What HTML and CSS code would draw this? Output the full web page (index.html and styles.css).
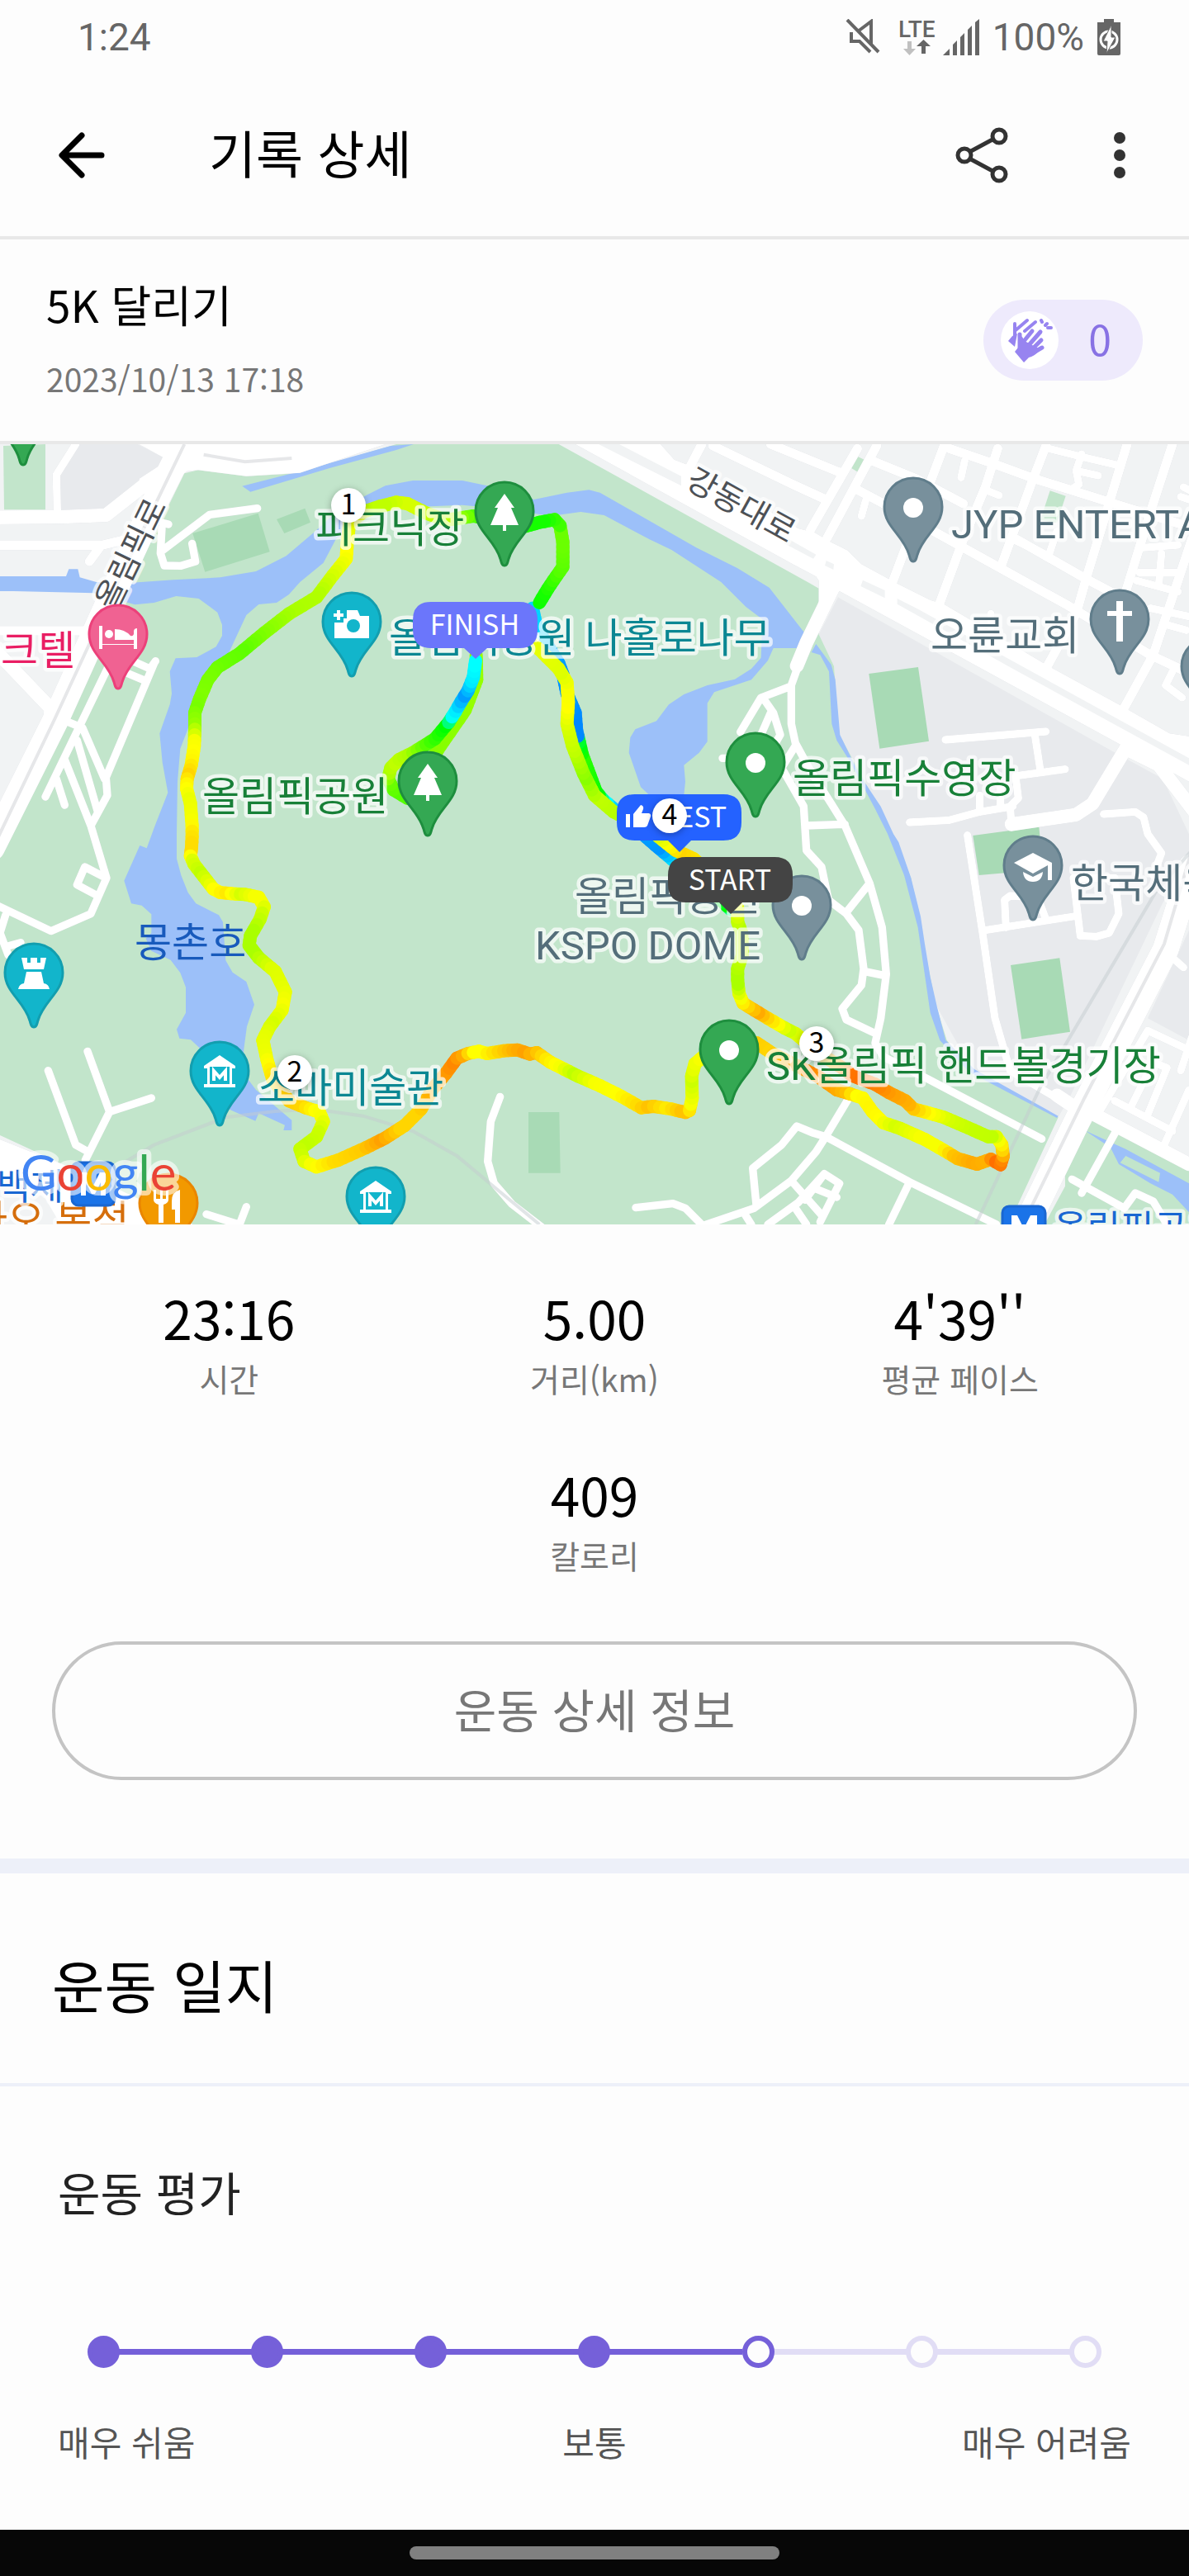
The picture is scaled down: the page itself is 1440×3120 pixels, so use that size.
FILE: index.html
```html
<!DOCTYPE html>
<html lang="ko">
<head>
    <meta charset="UTF-8">
    <meta name="viewport" content="width=device-width, initial-scale=1.0">
    <title>기록 상세</title>
    <link rel="stylesheet" href="styles.css">
</head>
<body>
    <!-- 상태 표시줄 -->
    <div class="status-bar">
        <span>1:24</span>
        <div class="status-icons">
            <svg class="icon-mute" width="42" height="44" viewBox="0 0 42 44">
                <path d="M15 15L31 3V32M7 16V27H17L30 40" fill="none" stroke="#666" stroke-width="4"/>
                <path d="M2 1L40 40" stroke="#666" stroke-width="4"/>
            </svg>
            <svg class="icon-lte" width="50" height="44" viewBox="0 0 50 44">
                <text x="0" y="22">LTE</text>
                <path d="M11 27h5v9h5l-7.500 8l-7.500-8h5z" fill="#c0c0c0"/>
                <path d="M28 42h5v-9h6l-8.500-8l-8.500 8h6z" fill="#666"/>
            </svg>
            <svg class="icon-signal" width="44" height="44" viewBox="0 0 44 44" fill="#666">
                <path d="M0 44L8 36V44zM12 44V31L17 26V44zM21 44V22L26 17V44zM30 44V13L35 8V44zM39 44V4L44 0V44z"/>
            </svg>
            <span>100%</span>
            <svg width="28" height="44" viewBox="0 0 28 44">
                <path d="M8 0h12v4h8v38q0 2-2 2H2q-2 0-2-2V4h8z" fill="#666"/>
                <circle cx="14" cy="25" r="10" fill="none" stroke="#fdfdfd" stroke-width="3"/>
                <path d="M17 7L7 27H12L11 42L22 22H17z" fill="#fdfdfd" stroke="#666" stroke-width="1"/>
            </svg>
        </div>
    </div>

    <!-- 상단 바 -->
    <header class="app-bar">
        <button class="icon-button" aria-label="뒤로">
            <svg width="60" height="60" viewBox="0 0 60 60" fill="none" stroke="#000" stroke-width="7" stroke-linecap="round" stroke-linejoin="round">
                <path d="M30 6L6 30L30 54M7 30H54"/>
            </svg>
        </button>
        <h1>기록 상세</h1>
        <div class="app-actions">
            <button class="icon-button" aria-label="공유">
                <svg width="64" height="68" viewBox="0 0 64 68" fill="none" stroke="#333" stroke-width="5">
                    <circle cx="11" cy="34" r="8"/>
                    <circle cx="53" cy="11" r="8"/>
                    <circle cx="53" cy="57" r="8"/>
                    <path d="M19 29L45 15M19 39L45 53"/>
                </svg>
            </button>
            <button class="icon-button" aria-label="더보기">
                <svg width="14" height="56" viewBox="0 0 14 56" fill="#333">
                    <circle cx="7" cy="7" r="7"/>
                    <circle cx="7" cy="28" r="7"/>
                    <circle cx="7" cy="49" r="7"/>
                </svg>
            </button>
        </div>
    </header>

    <main>
        <section class="summary">
            <div class="summary-text">
                <h2>5K 달리기</h2>
                <p>2023/10/13 17:18</p>
            </div>
            <button class="clap" aria-label="박수 0">
                <svg width="70" height="70" viewBox="0 0 70 70">
                    <circle cx="35" cy="35" r="35" fill="#fff"/>
                    <g fill="#9784f0" stroke="#9784f0" stroke-width="5" stroke-linecap="round">
                        <path d="M17 15V31M18 23L32 11M29 24L42 13M49 11L50 13M56 15L54 17M61 20H57" fill="none" stroke-width="4"/>
                        <path d="M14 30L20 27L17 43L9 36z" stroke="none"/>
                        <path d="M23 28V44M29 35L38 24M34 41L48 25M38 46L49 35M38 51L50 44" fill="none"/>
                        <path d="M21 28L26 31L29 36L38 41L48 46Q42 54 34 56L28 62L17 49L21 44z" stroke="none"/>
                    </g>
                </svg>
                <span>0</span>
            </button>
        </section>

        <!-- 지도 -->
        <svg class="map" viewBox="0 0 1440 945" role="img" aria-label="달린 경로">
            <defs>
                <path id="pin" d="M0 66C-3 66-4 62-5 58C-12 34-35 24-35 0A35 35 0 0 1 35 0C35 24 12 34 5 58C4 62 3 66 0 66z"/>
                <path id="tree" d="M0-21L12-4H8L17 17H2V24H-2V17H-17L-8-4H-12z" fill="#fff"/>
                <circle id="dot" cy="1" r="12" fill="#fff"/>
                <g id="museum">
                    <path d="M0-19L19-6V-3H15V16H19V20H-19V16H-15V-3H-19V-6z" fill="#fff"/>
                    <path d="M-12-5H12V16H-12z" fill="#12b5cb"/>
                    <path d="M-7 12V0L0 8L7 0V12" fill="none" stroke="#fff" stroke-width="4"/>
                </g>
            </defs>
            <rect class="land" width="1440" height="945"/>

            <g transform="translate(0 -8) scale(.33333)">
                <!-- 녹지와 부지 -->
                <g class="block">
                    <path d="M270 24H500L610 80L510 150L380 260L220 265L215 140z"/>
                    <path d="M3045 580L4060 1150L4225 1240L4320 1440V1560L4225 1690L3890 2390L3845 2470L3530 2295L3400 2060L3215 1410L3050 1080L3030 830L2975 715z"/>
                    <path d="M4320 1790L4170 2110L4320 2190z"/>
                </g>
                <g class="park">
                    <path d="M2030 24L2940 528L2975 548V715L3030 830L3040 960L3050 1080L3245 1440L3310 1600L3350 1810L3400 2060L3440 2190L3530 2295L3845 2470L3665 2859H700L0 2535V1500L30 1440L670 130L720 118L895 140L1080 130L1440 24z"/>
                    <path d="M12 30L165 24V262H15z"/>
                    <path d="M3970 2480L4320 2660V2859H3795L3870 2720V2660z"/>
                    <path d="M3115 68L3140 80L3118 126L3092 110z"/>
                    <path d="M3815 193L3872 212L3840 310L3780 300z"/>
                </g>
                <g class="field">
                    <path d="M700 348L938 275L980 415L745 488z"/>
                    <path d="M1005 297L1108 257L1128 308L1033 348z"/>
                    <path d="M3157 858L3336 834L3375 1103L3196 1130z"/>
                    <path d="M3672 1917L3850 1891L3888 2159L3712 2186z"/>
                    <path d="M3535 1446L3775 1414L3790 1570L3557 1590z"/>
                    <path d="M1920 2451H2032L2036 2672H1920z"/>
                </g>

                <!-- 물 -->
                <g class="water">
                    <path d="M0 504H240L250 478H283L290 508L350 525L480 527L630 517L800 508L930 486L1040 430L1140 345L1200 290L1330 210L1400 175L1500 156H1680L1770 175L1940 225L2060 200L2140 190L2180 200L2530 400L2680 475L2795 545L2925 712L2895 765H2810L2790 810L2730 880L2595 925L2570 965V1105L2540 1145L2485 1190L2490 1250L2485 1300H2360L2328 1270L2285 1145L2290 1090L2308 1060L2385 1030L2430 970L2485 933L2570 900L2670 878L2730 840L2765 800L2770 660L2710 615L2620 525L2440 408L2360 370L2195 282L2110 270L2000 285L1840 260L1680 245L1440 255L1330 285L1220 370L1175 455L1090 525L1050 570L1005 600L940 606L895 645L830 785L780 850L740 940L690 1040L655 1130L645 1250L642 1440V1530L658 1590L683 1653L712 1693L795 1735L810 1760L820 1900L845 1943L895 1977L924 2060L897 2140L885 2230L900 2330L930 2370L1060 2480V2517H1030L1035 2498L940 2455L928 2483L820 2435L725 2390V2218L693 2188L652 2183L642 2150L675 2090V1997L655 1945L620 1898L550 1865L530 1820L550 1800V1732L515 1700L477 1693L451 1610L508 1482L533 1492L563 1410L610 1290L590 1180L580 1075L617 970L624 930L617 850L638 802L715 798L785 760L807 720V680L790 635L722 585L640 576L560 600L490 607L340 565L50 558H0z"/>
                    <path d="M880 176L1100 120L1420 30L1503 24L1440 45L1200 110L910 197z"/>
                    <path d="M2880 668L2920 712L2900 765H2870z"/>
                    <path d="M2965 750L3020 825L3035 880L3052 1080L3120 1220L3200 1340L3246 1440L3265 1470L3310 1600L3345 1740L3360 1840L3380 1960L3405 2070L3436 2190L3540 2295L3845 2465L3840 2472L3520 2305L3415 2190L3380 2090L3335 1780L3285 1590L3225 1440L3180 1350L3090 1180L3040 1100L3022 1040L3012 850L2980 790L2948 780z"/>
                    <path d="M3942 2518L4090 2585L4320 2710V2815L4260 2750L4180 2710L4065 2640L4035 2580z"/>
                </g>
                <path class="park" d="M4090 2610L4215 2672L4210 2705L4070 2635z"/>

                <!-- 도로 -->
                <g class="roads">
                    <path class="fill" d="M505 24L610 82L505 150L525 195L560 230L640 150L680 122L720 118L895 140L1090 128L1400 24z"/>
                    <path class="fill" d="M0 2550L300 2670L700 2859H0z"/>
                    <path class="fill" d="M2090 24H2400L2450 80L2540 115L2900 330L2960 345L3020 380L3080 410L3130 460L3260 530L3380 590L3430 605L3810 830L4075 975L4250 1075L4320 1085V1250L4110 1135L4070 1115L3050 558L2975 610V520L2965 505L2880 460z"/>
                    <path class="r90" d="M-30 1490L200 1030L440 500L560 240L680 0"/>
                    <path class="r50" d="M-20 290L225 288L385 282L540 160M-20 770L185 985L180 1060M3675 1405L3910 1370L3970 1330L4090 1130"/>
                    <path class="r50" d="M3035 530L2930 745L2895 830"/>
                    <path class="r34" d="M-20 392H365L450 372M365 395L325 450M-20 702H320M3115 40L2945 335M3185 30L3005 365M3430 30L3245 520M3625 40L3580 180L3500 370L3415 600M3450 40L3610 95L3760 150L3890 190L4080 250L4340 330M3115 190L3210 240L3500 400L3880 610L3980 670L4180 790L4340 865M3800 30L3750 160L3640 460M4095 24L3950 500L3910 640L3800 840M3695 370L3940 510L4110 600M4260 24L4180 270L4090 560M4330 370L4190 790L4080 990M2550 24L2510 100M2590 30L2880 170L3000 225M2800 24L3060 130M3170 85L3330 150L3500 240"/>
                    <path class="r28" d="M208 265L205 135L275 24M590 310L612 315M588 330L583 420L597 465L658 466L710 450L698 385M590 410L762 280L935 257M490 815L545 840L565 812M460 855L520 880M560 820L385 1235L390 1300L330 1410L387 1600L330 1730L185 1793L-10 1700M390 840L165 1305M215 1020L300 1055L380 1240M280 1100L355 1360M235 1170L330 1410M205 1240L235 1335M355 1665L280 1625L308 1560L385 1600M20 1735L0 1800L30 1880M20 1850L75 1835M175 2300L275 2570L320 2595M318 2230L398 2450L550 2400M398 2450L310 2625M750 2822L870 2860L895 2795"/>
                    <path class="r28" d="M1817 2395L1783 2485L1772 2630L1795 2710L1860 2785L1970 2870M2310 2798L2445 2783L2490 2800L2550 2860M2950 2525L2895 2502L2840 2570L2735 2655L2748 2790M2550 2865L2740 2800L2875 2700L2965 2595L3000 2540L3090 2390M2705 2820L2730 2860M2875 2700L2990 2830M2790 2859L2900 2780L2995 2675M2890 2800L2930 2859M2950 2525L3000 2540L3305 2705L3520 2810L3620 2859M3305 2705L3230 2859M2925 2770L2995 2675L3050 2710L2980 2850M2965 2730L3040 2760"/>
                    <path class="r28" d="M2900 830L2875 900V1040L2890 1110L2950 1220L3020 1330L3070 1410L3160 1620L3205 1780L3220 1950L3200 2110L3180 2200L3210 2250L3370 2330L3785 2548M2870 905L2765 945L2690 1070M2775 950L2810 1000L2835 1080L2800 1140M2800 1000L2765 1080M2890 1120L2840 1200L2920 1340L2930 1500L2985 1560L3010 1680L3075 1730L3120 1790L3138 1930L3130 1990L3060 2075L3075 2115L3180 2165M2930 1410L3070 1405M3075 1725L3155 1625M3142 1940L3215 1955M2625 1165H2650"/>
                    <path class="r28" d="M3505 85L3492 145M3580 190L3630 210M3810 40L3930 70L4060 100M3930 60L3910 120L3920 170L3890 190M3930 125L3990 138M3680 370L3810 430L3840 340M4130 520L4280 560M4150 400L4280 390M4220 420L4210 540M4140 490L4280 490M4180 620L4320 650M4240 680L4310 700M4260 850L4235 900L4295 945M3145 230L3130 285M4300 180L4320 190M4290 215L4320 225M3600 640V700"/>
                    <path class="r28" d="M3435 1098L3800 1068M3760 1080L3780 1210M3700 1228L3870 1205M3690 1230L3700 1310L3670 1340L3675 1405M3560 1300V1350M3305 1398L3450 1390L3560 1360L3680 1340M3635 1270V1340M4010 1368L4125 1360L4155 1380L4170 1440L4220 1510L4190 1590M3515 1445L3570 1800L3615 2110L3670 2300L3840 2400M3580 1790L3900 1740M3655 1780L3650 1680L3670 1665L3770 1670L3800 1750M3900 1600L3925 1810L3985 1813L4030 1800L4065 1730L4050 1600z"/>
                    <path class="r28" d="M4000 2440L4170 2155L4320 2225M4110 2430L4190 2270L4240 2290L4170 2460M4050 2410L4260 2520M4230 2570L4320 2370M4290 2300L4330 2180M4055 2520L3930 2745M3895 2695L4085 2800L4125 2745L4190 2775L4240 2859M4260 1890L4300 1925"/>
                    <path class="r50" d="M3940 2440L4320 2640M4110 1140L4210 1190L4340 1360M3840 2390L3900 2430"/>
                    <path class="r90" d="M3710 2900L3925 2460L4235 1860L4330 1560"/>
                </g>
                <g class="land">
                    <path d="M2175 24H2250L2475 140V175z"/>
                    <path d="M2850 360L2965 425L2955 440L2850 385z"/>
                    <path d="M3135 518L3215 555V583L3127 540z"/>
                    <path d="M3260 585L3330 620L4320 1165V1190L3680 840L3260 605z"/>
                    <path d="M3002 447L3030 460L3028 480L2997 465z"/>
                    <path d="M0 2680L150 2740L220 2859H0z"/>
                </g>
                <g class="rail">
                    <path d="M-20 1480L200 1020L440 500L670 24M740 62L890 88L1060 75"/>
                    <path d="M3740 2810L3940 2400L4230 1840L4330 1500"/>
                    <path class="metro-line" d="M3545 2859L3780 2360L4200 1650L4330 1500M450 2635L560 2570L820 2470L1000 2448L1140 2440L1320 2465L1500 2520L1660 2610L1840 2760L1960 2859"/>
                </g>
            </g>

            <!-- 경로는 track.js에서 그린다 -->
            <g id="track" transform="translate(0 -8) scale(.33333)"></g>

            <!-- 장소 이름 -->
            <g class="places">
                <g class="road-name">
                    <text transform="translate(171 139) rotate(-64)">올림픽로</text>
                    <text transform="translate(891 86) rotate(29)">강동대로</text>
                </g>
                <g class="green">
                    <text x="382" y="119">피크닉장</text>
                    <text x="245" y="444">올림픽공원</text>
                    <text x="960" y="422">올림픽수영장</text>
                    <text x="928" y="770">SK올림픽 핸드볼경기장</text>
                </g>
                <g class="teal">
                    <text x="471" y="252">올림픽공원 나홀로나무</text>
                    <text x="312" y="797">소마미술관</text>
                </g>
                <g class="slate">
                    <text x="1152" y="114">JYP ENTERTAINMENT</text>
                    <text x="1127" y="249">오륜교회</text>
                    <text x="1297" y="549">한국체육대학교</text>
                    <text x="696" y="565">올림픽공원</text>
                    <text x="648" y="624">KSPO DOME</text>
                </g>
                <text class="pink" x="-44" y="267">파크텔</text>
                <text class="lake" x="163" y="621">몽촌호</text>
                <text class="orange" x="-36" y="957">다오 본점</text>
                <g class="blue">
                    <text x="-4" y="915">백제</text>
                    <text x="1276" y="966">올림픽공원</text>
                </g>
            </g>

            <!-- 핀 -->
            <g class="pins">
                <g class="pin-green">
                    <g transform="translate(28 -41)"><use href="#pin"/></g>
                    <g transform="translate(611 81)"><use href="#pin"/><use href="#tree"/></g>
                    <g transform="translate(518 408)"><use href="#pin"/><use href="#tree"/></g>
                    <g transform="translate(915 385)"><use href="#pin"/><use href="#dot"/></g>
                    <g transform="translate(883 733)"><use href="#pin"/><use href="#dot"/></g>
                </g>
                <g class="pin-gray">
                    <g transform="translate(1106 76)"><use href="#pin"/><use href="#dot"/></g>
                    <g transform="translate(971 558)"><use href="#pin"/><use href="#dot"/></g>
                    <g transform="translate(1466 269)"><use href="#pin"/></g>
                    <g transform="translate(1356 212)"><use href="#pin"/><path class="glyph" d="M-4-22H4V-10H15V-4H4V27H-4V-4H-15V-10H-4z"/></g>
                    <g transform="translate(1251 510)"><use href="#pin"/><path class="glyph" d="M0-15L23-3V18H18V0L0 10L-23-3zM-12 8L0 14L12 8Q11 20 0 20Q-11 20-12 8z"/></g>
                </g>
                <g class="pin-teal">
                    <g transform="translate(426 215)"><use href="#pin"/>
                        <path class="glyph" d="M-6-14H7L10-7H21V20H-21V1H-10V-4H-6zM-18-14H-14V-10H-10V-6H-14V-2H-18V-6H-22V-10H-18z"/>
                        <circle cx="2" cy="5" r="8" stroke="none"/>
                    </g>
                    <g transform="translate(41 640)"><use href="#pin"/><path class="glyph" d="M-15-18H-8V-12H-4V-18H4V-12H8V-18H15L12-4H-12zM-9-1H9L12 13Q18 14 19 20H-19Q-18 14-12 13z"/></g>
                    <g transform="translate(266 759)"><use href="#pin"/><use href="#museum"/></g>
                    <g transform="translate(455 911)"><use href="#pin"/><use href="#museum"/></g>
                </g>
                <g class="pin-pink" transform="translate(143 230)"><use href="#pin"/>
                    <path class="glyph" d="M-23-10H-19V12H19V-3Q19-7 23-7V18H19V13H-19V18H-23zM-4-6Q8-6 15 2Q18 3 19 0V7H-4z"/>
                    <circle class="glyph" cx="-11" cy="0" r="5"/>
                </g>
                <g class="pin-orange" transform="translate(204 919)"><use href="#pin"/>
                    <path class="glyph" d="M-18-16H-15V-5H-10V-16H-7V-5H-3V-16H0V-4Q0 0-6 2V24H-12V2Q-18 0-18-4zM4-2Q4-14 14-16V24H8V8H4z"/>
                </g>
                <g class="metro">
                    <rect x="1214" y="923" width="52" height="52" rx="8"/>
                    <path class="glyph" d="M1225 965V934H1232L1240 950L1248 934H1256V965z"/>
                    <rect x="87" y="870" width="52" height="52" rx="8"/>
                    <path class="glyph" d="M98 910V882H105L113 898L121 882H128V910H122V894L115 908H111L104 894V910z"/>
                </g>
            </g>

            <text class="google" x="25" y="904"><tspan fill="#4285f4">G</tspan><tspan fill="#ea4335">o</tspan><tspan fill="#fbbc04">o</tspan><tspan fill="#4285f4">g</tspan><tspan fill="#34a853">l</tspan><tspan fill="#ea4335">e</tspan></text>

            <!-- 시작 / 종료 / 최고 기록 -->
            <g class="badges">
                <path fill="#2462ff" d="M769 424H876Q898 424 898 446V458Q898 480 876 480H837L823 494L809 480H769Q747 480 747 458V446Q747 424 769 424z"/>
                <path fill="#fff" d="M758 448H763V464H758zM767 464V448L776 437Q780 438 779 442L777 447H786Q789 448 788 451L784 462Q783 464 780 464z"/>
                <text x="839" y="464">BEST</text>
                <path fill="#444" d="M831 500H938Q960 500 960 522V533Q960 555 938 555H899L885 569L871 555H831Q809 555 809 533V522Q809 500 831 500z"/>
                <text x="884" y="540">START</text>
                <path fill="#6b76fb" d="M522 191H629Q651 191 651 213V225Q651 247 629 247H590L576 260L562 247H522Q500 247 500 225V213Q500 191 522 191z"/>
                <text x="575" y="231">FINISH</text>
            </g>
            <g class="km">
                <circle cx="422" cy="74" r="21"/><text x="422" y="85">1</text>
                <circle cx="357" cy="761" r="21"/><text x="357" y="772">2</text>
                <circle cx="989" cy="726" r="21"/><text x="989" y="737">3</text>
                <circle cx="811" cy="450" r="21"/><text x="811" y="461">4</text>
            </g>
        </svg>

        <dl class="stats">
            <div><dd>23:16</dd><dt>시간</dt></div>
            <div><dd>5.00</dd><dt>거리(km)</dt></div>
            <div><dd>4'39''</dd><dt>평균 페이스</dt></div>
            <div class="calories"><dd>409</dd><dt>칼로리</dt></div>
        </dl>

        <button class="detail-button">운동 상세 정보</button>

        <!-- 운동 일지 -->
        <section class="journal">
            <h2>운동 일지</h2>
            <div class="rating">
                <label for="rating">운동 평가</label>
                <div class="slider">
                    <span class="on"></span>
                    <span class="on"></span>
                    <span class="on"></span>
                    <span class="on"></span>
                    <span></span>
                    <span></span>
                    <span></span>
                    <input type="range" id="rating" min="1" max="7" value="5">
                </div>
                <div class="slider-labels">
                    <span>매우 쉬움</span>
                    <span>보통</span>
                    <span>매우 어려움</span>
                </div>
            </div>
        </section>
    </main>

    <div class="nav-bar"><span></span></div>

    <script src="track.js"></script>
</body>
</html>
```
FILE: styles.css
```css
* {
    box-sizing: border-box;
}
body {
    margin: 0;
    min-height: 100vh;
    display: flex;
    flex-direction: column;
    background-color: #fdfdfd;
    color: #000;
    font-family: 'Noto Sans CJK KR', sans-serif;
}
main {
    flex: 1;
}
h1, h2, p, dl, dd {
    margin: 0;
    font-weight: 400;
}
button {
    font-family: inherit;
    cursor: pointer;
}

/* 상태 표시줄 */
.status-bar {
    display: flex;
    justify-content: space-between;
    align-items: center;
    height: 90px;
    padding: 0 83px 0 94px;
    color: #666;
    font-family: Roboto, sans-serif;
    font-size: 46px;
    line-height: 56px;
}
.status-icons {
    display: flex;
    align-items: center;
    gap: 16px;
}
.icon-mute {
    margin-right: 6px;
}
.icon-lte {
    margin-right: -12px;
}
.icon-lte text {
    font-size: 28px;
    font-weight: 500;
    fill: #666;
}

/* 상단 바 */
.app-bar {
    display: flex;
    align-items: center;
    height: 200px;
    padding: 0 77px 0 69px;
    border-bottom: 4px solid #e8e8e8;
}
.app-bar h1 {
    flex: 1;
    margin-left: 124px;
    padding-bottom: 8px;
    font-size: 62px;
    line-height: 90px;
}
.app-actions {
    display: flex;
    align-items: center;
    gap: 128px;
}
.icon-button {
    display: flex;
    padding: 0;
    border: none;
    background: none;
}

.summary {
    display: flex;
    justify-content: space-between;
    align-items: center;
    padding: 38px 56px;
    border-bottom: 4px solid #e8e8e8;
}
.summary-text {
    padding-bottom: 10px;
}
.summary h2 {
    font-size: 53px;
    line-height: 80px;
}
.summary p {
    margin-top: 22px;
    color: #777;
    font-size: 39px;
    line-height: 56px;
}
.clap {
    display: flex;
    align-items: center;
    gap: 36px;
    height: 98px;
    padding: 0 38px 0 21px;
    border: none;
    border-radius: 49px;
    background-color: #eeeafc;
    color: #8872e4;
    font-size: 50px;
    line-height: 70px;
}
.clap span {
    padding-bottom: 6px;
}

/* 지도 */
.map {
    display: block;
    width: 100%;
    height: auto;
}
.land { fill: #f1f3f4; }
.block { fill: #e8eaed; }
.park { fill: #c2e5cb; }
.field { fill: #a8dab5; }
.water { fill: #9cc0f9; }
.roads {
    fill: none;
    stroke: #fff;
    stroke-linecap: round;
    stroke-linejoin: round;
    filter: drop-shadow(0 0 2px #cfd2d8);
}
.roads .fill {
    fill: #fff;
    stroke: none;
}
.r28 { stroke-width: 28; }
.r34 { stroke-width: 34; }
.r50 { stroke-width: 50; }
.r90 { stroke-width: 96; }
.rail {
    fill: none;
    stroke: #e6e7e9;
    stroke-width: 12;
}
.metro-line {
    stroke: #c4cbd0;
    stroke-opacity: .5;
}
#track {
    fill: none;
    stroke-width: 48;
    stroke-linecap: round;
}
.places {
    font-family: Roboto, 'Noto Sans CJK KR', sans-serif;
    font-size: 49px;
    stroke: rgba(255, 255, 255, .7);
    stroke-width: 9;
    stroke-linejoin: round;
    paint-order: stroke;
}
.road-name {
    fill: #4d5156;
    font-size: 39px;
    text-anchor: middle;
}
.green { fill: #188038; }
.teal { fill: #0b8793; }
.slate { fill: #546e7a; }
.pink { fill: #e91e63; }
.orange { fill: #d56e0c; }
.lake {
    fill: #185abc;
    stroke: none;
}
.blue {
    fill: #1967d2;
    font-size: 44px;
}
.pins { stroke-width: 3; }
.pin-green { fill: #34a853; stroke: #1e8e3e; }
.pin-gray { fill: #78909c; stroke: #607d8b; }
.pin-teal { fill: #12b5cb; stroke: #129eaf; }
.pin-pink { fill: #f06292; stroke: #ec407a; }
.pin-orange { fill: #f29900; stroke: #ea8600; }
.metro { fill: #1a73e8; stroke: #1967d2; }
.glyph, #dot, #tree, #museum {
    stroke: none;
}
.glyph { fill: #fff; }
.google {
    font-family: Lato, sans-serif;
    font-size: 60px;
    stroke: rgba(255, 255, 255, .6);
    stroke-width: 12;
    stroke-linejoin: round;
    paint-order: stroke;
}
.badges text {
    fill: #fff;
    font-size: 34px;
    text-anchor: middle;
}
.km circle {
    fill: #fff;
    filter: drop-shadow(0 2px 4px rgba(0, 0, 0, .3));
}
.km text {
    font-size: 34px;
    text-anchor: middle;
}

/* 운동 수치 */
.stats {
    display: grid;
    grid-template-columns: repeat(3, 1fr);
    row-gap: 68px;
    padding: 68px 56px 77px;
    text-align: center;
}
.stats div {
    display: flex;
    flex-direction: column;
    gap: 2px;
}
.stats .calories {
    grid-column: 2;
}
.stats dd {
    font-size: 64px;
    line-height: 88px;
}
.stats dt {
    color: #777;
    font-size: 39px;
    line-height: 56px;
}
.detail-button {
    display: block;
    width: calc(100% - 126px);
    height: 168px;
    margin: 0 63px 95px;
    padding: 0 0 6px;
    border: 4px solid #c4c4c4;
    border-radius: 84px;
    background: none;
    color: #777;
    font-size: 56px;
    line-height: 84px;
}

/* 운동 일지 */
.journal {
    border-top: 18px solid #edf0f9;
}
.journal h2 {
    padding: 84px 63px 70px;
    border-bottom: 4px solid #edf0f9;
    font-size: 69px;
    line-height: 100px;
}
.rating {
    padding: 85px 70px 76px;
}
.rating label {
    display: block;
    color: #222;
    font-size: 56px;
    line-height: 84px;
}
.slider {
    position: relative;
    display: flex;
    justify-content: space-between;
    margin: 133px 36px 59px;
}
/* 점 뒤의 선 */
.slider::before {
    content: '';
    position: absolute;
    top: 16px;
    left: 20px;
    right: 20px;
    height: 7px;
    background: linear-gradient(to right, #7560d9 66%, #e1ddf5 66%);
}
.slider span {
    position: relative;
    width: 39px;
    height: 39px;
    border: 6px solid #e1ddf5;
    border-radius: 50%;
    background-color: #fdfdfd;
}
.slider .on {
    border-color: #7560d9;
    background-color: #7560d9;
}
.slider input {
    position: absolute;
    top: 0;
    left: 0;
    width: 100%;
    height: 39px;
    margin: 0;
    appearance: none;
    background: none;
}
.slider input::-webkit-slider-thumb {
    appearance: none;
    width: 39px;
    height: 39px;
    border: 6px solid #7560d9;
    border-radius: 50%;
    background-color: #fdfdfd;
}
.slider-labels {
    display: grid;
    grid-template-columns: 1fr auto 1fr;
    color: #555;
    font-size: 42px;
    line-height: 60px;
}
.slider-labels span:last-child {
    text-align: right;
}

/* 하단 내비게이션 */
.nav-bar {
    display: flex;
    justify-content: center;
    align-items: center;
    height: 56px;
    background-color: #070707;
}
.nav-bar span {
    width: 448px;
    height: 16px;
    border-radius: 8px;
    background-color: #808080;
}
```
FILE: track.js
```js
// 각 점: x, y, 색상(페이스에 따라 달라짐)
const startPoints = [
    [2655,1715,180],[2630,1690,120],[2380,1480,205],[2225,1345,200],[2190,1315,180],[2165,1285,120],[2115,1150,110],
    [2100,1085,130],[2095,1065,208],[2090,1000,208],[2060,930,205],[2045,860,205],[2030,820,205],[1950,690,190],[1935,620,190]
];
const lapPoints = [
    [1960,600,118],[1990,550,115],[2010,520,110],[2045,470,100],[2045,380,95],[2035,320,95],[2015,298,105],[1960,308,115],
    [1910,322,115],[1720,285,105],[1620,300,75],[1550,275,75],[1480,240,70],[1440,235,70],[1380,250,75],[1320,270,75],
    [1270,310,65],[1262,380,65],[1258,440,60],[1210,500,68],[1150,580,78],[1050,640,80],[960,710,88],[870,785,98],
    [790,835,95],[755,880,92],[725,950,90],[708,1000,92],[708,1060,85],[706,1120,62],[695,1190,58],[680,1240,50],
    [678,1275,58],[692,1330,65],[698,1410,62],[698,1450,55],[696,1490,52],[692,1520,52],[705,1550,68],[740,1595,75],
    [775,1640,65],[800,1653,60],[840,1657,55],[890,1660,70],[940,1670,62],[960,1705,62],[945,1750,72],[910,1810,80],
    [905,1845,80],[940,1890,80],[1000,1940,68],[1037,2015,66],[1025,2080,62],[980,2140,70],[955,2190,66],[970,2260,64],
    [990,2330,55],[1050,2410,48],[1110,2435,50],[1160,2450,60],[1175,2485,62],[1150,2540,72],[1090,2585,75],
    [1105,2630,72],[1150,2650,62],[1230,2625,52],[1330,2580,48],[1400,2545,38],[1470,2500,50],[1530,2440,50],
    [1570,2370,42],[1620,2310,38],[1660,2255,32],[1700,2238,40],[1740,2230,60],[1770,2238,60],[1830,2228,50],
    [1880,2225,42],[1925,2240,38],[1950,2235,42],[2000,2270,55],[2050,2295,62],[2100,2320,75],[2180,2355,62],
    [2260,2395,60],[2330,2435,52],[2375,2430,46],[2440,2440,55],[2490,2452,46],[2505,2445,46],[2515,2400,62],
    [2513,2320,72],[2525,2275,66],[2560,2245,62],[2660,2200,60],[2750,2200,48],[2810,2240,50],[2880,2275,42],
    [2970,2320,32],[3040,2370,38],[3090,2385,45],[3135,2400,60],[3170,2450,58],[3210,2490,60],[3270,2510,70],
    [3360,2550,62],[3430,2590,62],[3480,2620,46],[3550,2640,40],[3600,2622,42],[3635,2642,26],[3645,2610,32],
    [3640,2570,50],[3620,2540,62],[3590,2540,75],[3500,2500,74],[3430,2470,70],[3360,2450,60],[3320,2440,52],
    [3290,2410,42],[3230,2380,38],[3180,2350,32],[3100,2320,26],[3060,2290,28],[2980,2240,50],[2890,2165,66],
    [2850,2145,72],[2790,2110,55],[2740,2080,40],[2700,2055,50],[2685,2020,62],[2680,1970,80],[2680,1930,80],
    [2697,1880,75],[2695,1800,75],[2680,1760,78],[2680,1710,68],[2600,1600,60],[2520,1530,55],[2455,1500,50],
    [2380,1440,68],[2230,1360,78],[2160,1300,75],[2120,1220,88],[2080,1120,75],[2060,1040,70],[2065,960,60],
    [2060,890,62],[2030,840,68],[1960,770,66],[1925,740,66]
];
const finishPoints = [
    [1730,790,85],[1732,880,85],[1690,990,85],[1600,1120,88],[1530,1230,90],[1480,1310,100],[1430,1280,100],
    [1410,1240,95],[1420,1200,80],[1450,1170,75],[1500,1145,80],[1580,1095,105],[1630,1035,120],[1655,995,178],
    [1675,960,190],[1700,920,203],[1720,870,185],[1728,810,180]
];

const track = document.getElementById('track');

// 색이 조금씩 바뀌도록 짧은 선으로 나누어 그린다
function drawTrack(points) {
    for (let i = 1; i < points.length; i++) {
        const [x1, y1, h1] = points[i - 1];
        const [x2, y2, h2] = points[i];
        const parts = Math.max(1, Math.round(Math.hypot(x2 - x1, y2 - y1) / 20));
        for (let p = 0; p < parts; p++) {
            const a = p / parts;
            const b = (p + 1) / parts;
            const line = document.createElementNS('http://www.w3.org/2000/svg', 'line');
            line.setAttribute('x1', x1 + (x2 - x1) * a);
            line.setAttribute('y1', y1 + (y2 - y1) * a);
            line.setAttribute('x2', x1 + (x2 - x1) * b);
            line.setAttribute('y2', y1 + (y2 - y1) * b);
            line.setAttribute('stroke', `hsl(${h1 + (h2 - h1) * b}, 100%, 50%)`);
            track.appendChild(line);
        }
    }
}

drawTrack(startPoints);
drawTrack(lapPoints);
drawTrack(finishPoints);
```
